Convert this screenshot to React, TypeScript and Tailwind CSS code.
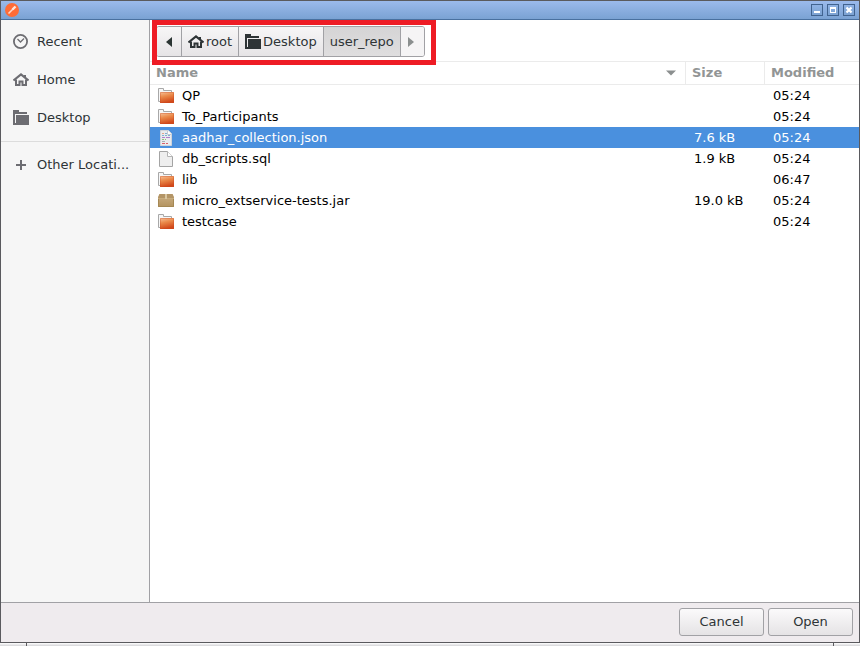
import React, { useState } from 'react';

type Kind = 'folder' | 'json' | 'file' | 'jar';

interface Entry {
  name: string;
  kind: Kind;
  size: string;
  modified: string;
}

const entries: Entry[] = [
  { name: 'QP', kind: 'folder', size: '', modified: '05:24' },
  { name: 'To_Participants', kind: 'folder', size: '', modified: '05:24' },
  { name: 'aadhar_collection.json', kind: 'json', size: '7.6 kB', modified: '05:24' },
  { name: 'db_scripts.sql', kind: 'file', size: '1.9 kB', modified: '05:24' },
  { name: 'lib', kind: 'folder', size: '', modified: '06:47' },
  { name: 'micro_extservice-tests.jar', kind: 'jar', size: '19.0 kB', modified: '05:24' },
  { name: 'testcase', kind: 'folder', size: '', modified: '05:24' },
];

function ClockIcon() {
  return (
    <svg className="size-4" viewBox="0 0 16 16" fill="none" stroke="#6d6d72" aria-hidden="true">
      <circle cx="7.5" cy="7.5" r="6.6" strokeWidth="1.8" />
      <path d="M4.5 5 7.5 8 11 4.500" strokeWidth="1.3" />
    </svg>
  );
}

function HomeIcon() {
  return (
    <svg className="size-4 shrink-0" viewBox="0 0 16 16" fill="none" stroke="currentColor" aria-hidden="true">
      <path d="M0.500 8.500 8 2.500l7.500 6" strokeWidth="2.200" />
      <path d="M3 7.500V13h3.500V9.500h3V13H13V7.500" strokeWidth="2" />
      <path d="M12 3v3" strokeWidth="2" />
    </svg>
  );
}

function DesktopIcon() {
  return (
    <svg className="size-4 shrink-0" viewBox="0 0 16 16" fill="currentColor" aria-hidden="true">
      <path d="M0 0h6v2h8v2H2v9l1 1H0z" />
      <path d="M3 5h13v10H0v-2h3z" />
    </svg>
  );
}

function PlusIcon() {
  return (
    <svg className="size-4" viewBox="0 0 16 16" fill="#6d6d72" aria-hidden="true">
      <path d="M7 3h2v4h4v2H9v4H7V9H3V7h4z" />
    </svg>
  );
}

function FolderIcon() {
  return (
    <svg className="size-4" viewBox="0 0 16 16" aria-hidden="true">
      <defs>
        <linearGradient id="folder-front" x1="0" y1="0" x2="0.300" y2="1">
          <stop offset="0" stopColor="#f6c39c" />
          <stop offset="0.450" stopColor="#ea8a4a" />
          <stop offset="1" stopColor="#d2491a" />
        </linearGradient>
      </defs>
      <path d="M0.500 13.500v-13h5v2h8v11z" fill="#f6f6f6" stroke="#a8a8a8" />
      <rect x="2" y="4" width="14" height="11" rx="0.500" fill="url(#folder-front)" />
      <path d="M2.500 14.500v-10h13v10z" fill="none" stroke="#c9481f" strokeOpacity="0.350" />
    </svg>
  );
}

function PaperIcon({ code }: { code?: boolean }) {
  return (
    <svg className="size-4" viewBox="0 0 16 16" aria-hidden="true">
      {code ? (
        <>
          <path d="M2.500 0.500h8l3 3v12h-11z" fill="#e9ebee" stroke="#d0d4da" />
          <path d="M9.500 0.500v4h4" fill="#ffffff" stroke="#c4cad2" />
          <path d="M4 3.500h2" stroke="#dfa58c" />
          <path d="M7 3.500h2M4 5.500h2M7 5.500h2M10 5.500h2" stroke="#7fb0cf" />
          <path d="M4 7.500h3M8 7.500h4" stroke="#b07fcc" />
          <path d="M4 9.500h2M7 9.500h1" stroke="#8fc07f" />
          <path d="M4 11.500h3" stroke="#a9adb5" />
          <path d="M4 13.500h3M8 13.500h2" stroke="#d8606c" />
        </>
      ) : (
        <>
          <path d="M1.500 0.500h8l5 5v10h-13z" fill="#eeeeee" stroke="#a4a4a4" />
          <path d="M9.500 0.500v5h5" fill="#ffffff" stroke="#b4b4b4" />
        </>
      )}
    </svg>
  );
}

function JarIcon() {
  return (
    <svg className="size-4" viewBox="0 0 16 16" aria-hidden="true">
      <defs>
        <linearGradient id="jar-front" x1="0" y1="0" x2="0" y2="1">
          <stop offset="0" stopColor="#ccb187" />
          <stop offset="1" stopColor="#b3935f" />
        </linearGradient>
      </defs>
      <path d="M1.500 1h13L16 4v10H0V4z" fill="url(#jar-front)" />
      <path d="M1.500 1h13L16 5H0z" fill="#b39567" />
      <path d="M0.500 5v8.500h15V5" fill="none" stroke="#a58854" />
      <path d="M0 5.500h16" stroke="#c8ad7f" />
      <path d="M7 1h2v5H7z" fill="#d9c6a0" />
    </svg>
  );
}

function FileIcon({ kind }: { kind: Kind }) {
  if (kind === 'folder') return <FolderIcon />;
  if (kind === 'jar') return <JarIcon />;
  return <PaperIcon code={kind === 'json'} />;
}

const windowButton =
  'flex size-3 items-center justify-center border border-[#41638f] bg-linear-to-b from-[#8fb2e4] to-[#7ba2d2]';

function TitleBar() {
  return (
    <header className="flex h-5 shrink-0 items-center justify-between border-t border-b border-t-[#5a5a5e] border-b-[#49709f] bg-linear-to-b from-[#9bbaec] to-[#7aa2d3] px-1">
      <svg className="size-3.5" viewBox="0 0 14 14" aria-label="Postman" role="img">
        <circle cx="7" cy="7" r="7" fill="#ff6c37" />
        <path d="M3.500 10.500 8.500 5.500" stroke="#ffd9c8" strokeWidth="1.600" />
        <path d="M7.500 6.500 10.500 3.500" stroke="#ffe7dc" strokeWidth="2.400" />
      </svg>
      <div className="flex gap-1">
        <button type="button" aria-label="Minimize" className={windowButton}>
          <svg className="size-2.5" viewBox="0 0 10 10" aria-hidden="true">
            <path d="M2 6h6v2H2z" fill="#fff" />
          </svg>
        </button>
        <button type="button" aria-label="Maximize" className={windowButton}>
          <svg className="size-2.5" viewBox="0 0 10 10" aria-hidden="true">
            <path d="M2 2h6v6H2zM3 4v3h4V4z" fill="#fff" fillRule="evenodd" />
          </svg>
        </button>
        <button type="button" aria-label="Close" className={windowButton}>
          <svg className="size-2.5" viewBox="0 0 10 10" aria-hidden="true">
            <path d="M2.500 2.500l5 5M7.500 2.500l-5 5" stroke="#fff" strokeWidth="2.200" />
          </svg>
        </button>
      </div>
    </header>
  );
}

const place = 'flex h-[38px] w-full items-center gap-2 pl-3 text-left whitespace-nowrap';

function Sidebar() {
  return (
    <nav aria-label="Places" className="w-[149px] shrink-0 border-r border-[#a1a1a5] bg-[#f6f6f6] pt-[3px] text-[#2e3436]">
      <button type="button" className={place}>
        <ClockIcon />
        Recent
      </button>
      <button type="button" className={place}>
        <span className="text-[#6d6d72]"><HomeIcon /></span>
        Home
      </button>
      <button type="button" className={place}>
        <span className="text-[#6d6d72]"><DesktopIcon /></span>
        Desktop
      </button>
      <hr className="my-1 border-[#dcdcdc]" />
      <button type="button" className={place}>
        <PlusIcon />
        Other Locati...
      </button>
    </nav>
  );
}

const crumb = 'flex items-center border-r border-[#a1a1a5] bg-linear-to-b from-[#f7f6f7] to-[#e6e4e6] px-1.5';

function PathBar() {
  return (
    <div className="relative h-[41px] shrink-0 px-1.5 py-1.5">
      <div className="flex h-[31px] w-max overflow-hidden rounded-[3px] border border-[#a1a1a5] text-[#2e3436]">
        <button type="button" aria-label="Scroll path left" className={`${crumb} w-[25px] justify-center`}>
          <svg className="h-2.5 w-1.5" viewBox="0 0 6 10" fill="#2b3533" aria-hidden="true">
            <path d="M6 0v10L0 5z" />
          </svg>
        </button>
        <button type="button" className={`${crumb} gap-0.5`}>
          <HomeIcon />
          root
        </button>
        <button type="button" className={`${crumb} gap-0.5`}>
          <DesktopIcon />
          Desktop
        </button>
        <button type="button" aria-current="page" className="flex items-center border-r border-[#a1a1a5] bg-linear-to-b from-[#d5d4d5] to-[#dfdedf] px-1.5">
          user_repo
        </button>
        <button type="button" aria-label="Scroll path right" className="flex w-[23px] items-center bg-[#f5f4f5] pl-[7px]">
          <svg className="h-2.5 w-1.5" viewBox="0 0 6 10" fill="#8b8f8f" aria-hidden="true">
            <path d="M0 0v10l6-5z" />
          </svg>
        </button>
      </div>
      <div className="pointer-events-none absolute top-0 left-0.5 h-[45px] w-[284px] border-5 border-[#ee1c25]" />
    </div>
  );
}

function FileTable() {
  const [selected, setSelected] = useState('aadhar_collection.json');
  return (
    <table className="w-full table-fixed border-separate border-spacing-0">
      <thead>
        <tr className="h-6 text-left text-[#929595]">
          <th scope="col" className="border-t border-r border-b border-[#ebebeb] p-0 pl-1.5">
            <div className="flex items-center justify-between pr-2">
              Name
              <svg className="h-1.5 w-3" viewBox="0 0 12 6" fill="#8b8f8f" aria-hidden="true">
                <path d="M1 0.500h10L6 5.500z" />
              </svg>
            </div>
          </th>
          <th scope="col" className="w-[79px] border-t border-r border-b border-[#ebebeb] p-0 pl-1.5">Size</th>
          <th scope="col" className="w-[94px] border-t border-b border-[#ebebeb] p-0 pl-1.5">Modified</th>
        </tr>
      </thead>
      <tbody>
        {entries.map((entry) => (
          <tr
            key={entry.name}
            onClick={() => setSelected(entry.name)}
            className={entry.name === selected ? 'h-[21px] bg-[#4a90de] text-white' : 'h-[21px] text-black'}
          >
            <td className="p-0 pl-2">
              <div className="flex items-center gap-2">
                <FileIcon kind={entry.kind} />
                {entry.name}
              </div>
            </td>
            <td className="p-0 pl-2">{entry.size}</td>
            <td className="p-0 pl-2">{entry.modified}</td>
          </tr>
        ))}
      </tbody>
    </table>
  );
}

const action =
  'h-7 w-[85px] rounded-[3px] border border-[#a1a1a5] bg-linear-to-b from-[#fbfafb] to-[#e5e3e5] text-[#2e3436]';

export default function App() {
  return (
    <div className="flex h-screen flex-col bg-white font-['DejaVu_Sans',sans-serif] text-[13px] leading-4">
      <div className="flex min-h-0 flex-1 flex-col border-r border-b border-l border-[#5a5a5e]">
        <TitleBar />
        <div className="flex min-h-0 flex-1">
          <Sidebar />
          <main className="flex min-w-0 flex-1 flex-col bg-white">
            <PathBar />
            <FileTable />
          </main>
        </div>
        <footer className="flex shrink-0 justify-end gap-1 border-t border-[#a1a1a5] bg-[#efebee] px-1.5 pt-[5px] pb-1.5">
          <button type="button" className={action}>Cancel</button>
          <button type="button" className={action}>Open</button>
        </footer>
      </div>
      <div className="flex h-[3px] shrink-0 bg-linear-to-b from-white to-[#d5d5d8]">
        <div className="w-[27px] border-r border-[#5a5a5e]" />
        <div className="flex-1" />
        <div className="w-[27px] border-l border-[#5a5a5e]" />
      </div>
    </div>
  );
}
